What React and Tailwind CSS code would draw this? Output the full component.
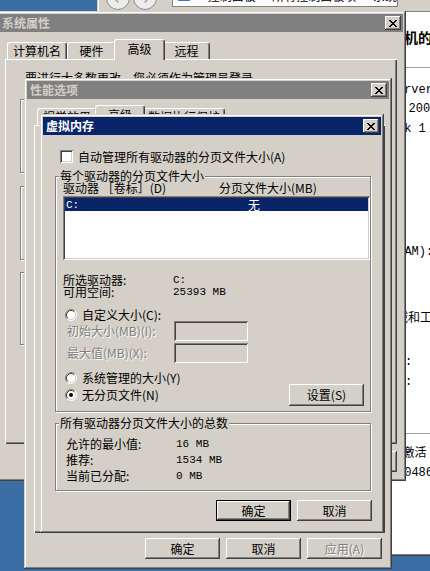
import React from 'react';
import { ArrowLeft, ArrowRight, ChevronRight } from 'lucide-react';

// classic 3D edges
const RAISED = 'shadow-[inset_-1px_-1px_#404040,inset_1px_1px_#ffffff,inset_-2px_-2px_#808080]';
const DEFAULT_BTN = 'shadow-[inset_0_0_0_1px_#000000,inset_-2px_-2px_#404040,inset_2px_2px_#ffffff,inset_-3px_-3px_#808080]';
const FRAME = 'shadow-[inset_-1px_-1px_#404040,inset_1px_1px_#d4d0c8,inset_-2px_-2px_#808080,inset_2px_2px_#ffffff]';
const SUNKEN = 'shadow-[inset_1px_1px_#808080,inset_-1px_-1px_#ffffff,inset_2px_2px_#404040,inset_-2px_-2px_#d4d0c8]';
const PANEL = 'shadow-[inset_1px_1px_#ffffff,inset_-1px_-1px_#404040,inset_-2px_-2px_#808080]';
const ETCHED = 'border border-[#808080] shadow-[inset_1px_1px_#ffffff,1px_1px_#ffffff]';
const DISABLED = 'text-[#808080] [text-shadow:1px_1px_0_#ffffff]';
const MONO = "font-['Liberation_Mono',monospace] text-[11px]";

const CloseBtn = () => (
  <span className={`w-[16px] h-[14px] flex items-center justify-center bg-[#d4d0c8] ${RAISED}`}>
    <svg width="8" height="7" viewBox="0 0 8 7" shapeRendering="crispEdges" fill="#000">
      <path d="M0 0h2v1H0zM6 0h2v1H6zM1 1h2v1H1zM5 1h2v1H5zM2 2h4v1H2zM3 3h2v1H3zM2 4h4v1H2zM1 5h2v1H1zM5 5h2v1H5zM0 6h2v1H0zM6 6h2v1H6z" />
    </svg>
  </span>
);

const Win = ({ title, active, className, children }) => (
  <div className={`absolute flex flex-col p-[3px] bg-[#d4d0c8] ${FRAME} ${className}`}>
    <div
      className={`h-[18px] shrink-0 flex items-center justify-between pl-[3px] pr-[2px] ${
        active ? 'bg-[#0a246a] text-white' : 'bg-[#808080] text-[#d4d0c8]'
      }`}
    >
      <span className="font-bold">{title}</span>
      <CloseBtn />
    </div>
    {children}
  </div>
);

const Tabs = ({ tabs, active, className }) => (
  <div className={`flex items-end h-[20px] relative z-10 ${className}`}>
    {tabs.map(([label, w], i) =>
      i === active ? (
        <div
          key={label}
          className={`${w} -mx-[2px] h-[21px] -mb-px relative z-10 bg-[#d4d0c8] border-t border-l border-white border-r border-r-[#404040] shadow-[inset_-1px_0_#808080] rounded-t-[3px] flex items-center justify-center pb-[2px]`}
        >
          {label}
        </div>
      ) : (
        <div
          key={label}
          className={`${w} h-[17px] bg-[#d4d0c8] border-t border-l border-white border-r border-r-[#404040] shadow-[inset_-1px_0_#808080] rounded-t-[3px] flex items-center justify-center`}
        >
          {label}
        </div>
      )
    )}
  </div>
);

const Group = ({ label, className, children }) => (
  <div className={`relative shrink-0 ${ETCHED} ${className}`}>
    <span className="absolute left-[3px] top-[-7px] px-[1px] bg-[#d4d0c8] leading-[12px] whitespace-nowrap">{label}</span>
    {children}
  </div>
);

const Btn = ({ children, def, disabled, className = '' }) => (
  <button
    className={`w-[75px] h-[21px] flex items-center justify-center bg-[#d4d0c8] ${def ? DEFAULT_BTN : RAISED} ${
      disabled ? DISABLED : ''
    } ${className}`}
  >
    {children}
  </button>
);

const Radio = ({ checked }) => (
  <svg width="12" height="12" viewBox="0 0 12 12" className="shrink-0">
    <circle cx="6" cy="6" r="5" fill="#fff" />
    <path d="M2.11 9.89A5.5 5.5 0 0 1 9.89 2.11" stroke="#808080" fill="none" />
    <path d="M9.89 2.11A5.5 5.5 0 0 1 2.11 9.89" stroke="#fff" fill="none" />
    <path d="M2.82 9.18A4.5 4.5 0 0 1 9.18 2.82" stroke="#404040" fill="none" />
    <path d="M9.18 2.82A4.5 4.5 0 0 1 2.82 9.18" stroke="#d4d0c8" fill="none" />
    {checked && <circle cx="6" cy="6" r="2" fill="#000" />}
  </svg>
);

const CpIcon = () => (
  <svg width="14" height="14" viewBox="0 0 14 14" className="shrink-0">
    <rect x="1" y="2" width="12" height="10" fill="#3b78c4" />
    <rect x="2" y="3" width="4" height="4" fill="#7fc35a" />
    <rect x="8" y="3" width="4" height="4" fill="#f2c744" />
    <rect x="2" y="8" width="10" height="3" fill="#d9e6f5" />
  </svg>
);

const Explorer = () => (
  <div className={`absolute z-[1] left-[97px] top-[-30px] w-[345px] h-[586px] flex flex-col bg-[#d4d0c8] p-[2px] ${FRAME}`}>
    <div className="h-[40px] shrink-0 border-b border-[#808080] flex items-end pb-[1px] pl-[7px]">
      <span className="w-[24px] h-[24px] rounded-full border border-[#8a8a8a] bg-[#ececec] flex items-center justify-center text-[#a0a0a0]">
        <ArrowLeft size={14} strokeWidth={2.5} />
      </span>
      <span className="ml-[3px] w-[24px] h-[24px] rounded-full border border-[#8a8a8a] bg-[#ececec] flex items-center justify-center text-[#a0a0a0]">
        <ArrowRight size={14} strokeWidth={2.5} />
      </span>
      <div className="ml-[15px] mb-[3px] w-[226px] h-[22px] bg-white border border-[#808080] flex items-center gap-[4px] pl-[4px] whitespace-nowrap">
        <CpIcon />
        <ChevronRight size={10} />
        <span>控制面板</span>
        <ChevronRight size={10} />
        <span>所有控制面板项</span>
        <ChevronRight size={10} />
        <span>系统</span>
      </div>
    </div>
    <div className="flex-1 bg-white flex flex-col whitespace-nowrap overflow-hidden font-['Liberation_Mono','Noto_Sans_CJK_SC',monospace]">
      <div className="mt-[18px] ml-[221px] text-[14px] leading-[14px] font-bold font-['Noto_Sans_CJK_SC',sans-serif]">
        查看有关计算机的基本信息
      </div>
      <div className="mt-[23px] ml-[200px] h-px bg-[#a0a0a0]" />
      <div className="mt-[16px] ml-[233px]">Windows Server 2008 R2 Enterprise</div>
      <div className="mt-[7px] ml-[240px]">版权所有 © 2009 Microsoft Corporation。保留所有权利。</div>
      <div className="mt-[8px] ml-[226px]">Service Pack 1</div>
      <div className="mt-[111px] ml-[243px]">安装内存(RAM):</div>
      <div className="mt-[55px] ml-[225px]">计算机名称、域和工作组设置</div>
      <div className="mt-[31px] ml-[258px]">计算机名:</div>
      <div className="mt-[8px] ml-[246px]">计算机全名:</div>
      <div className="mt-[45px] ml-[200px] h-px bg-[#a0a0a0]" />
      <div className="mt-[14px] ml-[246px]">Windows 激活</div>
      <div className="mt-[7px] ml-[238px]">产品 ID: 00486-001-0001076-84000</div>
    </div>
  </div>
);

const SystemProps = () => (
  <Win title="系统属性" className="z-[2] left-[-4px] top-[11px] w-[410px] h-[470px]">
    <Tabs
      className="mt-[7px] ml-[8px]"
      active={2}
      tabs={[
        ['计算机名', 'w-[60px]'],
        ['硬件', 'w-[49px]'],
        ['高级', 'w-[51px]'],
        ['远程', 'w-[47px]'],
      ]}
    />
    <div className={`ml-[6px] w-[392px] h-[385px] shrink-0 pt-[13px] pl-[15px] flex flex-col ${PANEL}`}>
      <p className="pl-[5px] leading-[12px]">要进行大多数更改，您必须作为管理员登录。</p>
      <Group label="性能" className="mt-[15px] w-[363px] h-[74px]">
        <p className="pt-[12px] pl-[10px]">视觉效果，处理器计划，内存使用，以及虚拟内存</p>
      </Group>
      <Group label="用户配置文件" className="mt-[13px] w-[363px] h-[74px]">
        <p className="pt-[12px] pl-[10px]">与您登录有关的桌面设置</p>
      </Group>
      <Group label="启动和故障恢复" className="mt-[12px] w-[363px] h-[73px]">
        <p className="pt-[12px] pl-[10px]">系统启动、系统失败和调试信息</p>
      </Group>
    </div>
    <div className="mt-[7px] pr-[6px] flex justify-end gap-[6px]">
      <Btn>确定</Btn>
      <Btn>取消</Btn>
      <Btn disabled>应用(A)</Btn>
    </div>
  </Win>
);

const PerfOptions = () => (
  <Win title="性能选项" className="z-[3] left-[24px] top-[78px] w-[368px] h-[491px]">
    <Tabs
      className="mt-[6px] ml-[10px]"
      active={1}
      tabs={[
        ['视觉效果', 'w-[60px]'],
        ['高级', 'w-[50px]'],
        ['数据执行保护', 'w-[82px]'],
      ]}
    />
    <div className={`ml-[7px] w-[351px] h-[408px] shrink-0 ${PANEL}`} />
    <div className="mt-[5px] pr-[7px] flex justify-end gap-[6px]">
      <Btn>确定</Btn>
      <Btn>取消</Btn>
      <Btn disabled>应用(A)</Btn>
    </div>
  </Win>
);

const VirtualMemory = () => (
  <Win title="虚拟内存" active className="z-[4] left-[40px] top-[114px] w-[344px] h-[419px]">
    <label className="mt-[15px] ml-[17px] h-[13px] flex items-center gap-[5px]">
      <span className={`w-[13px] h-[13px] bg-white ${SUNKEN}`} />
      <span>自动管理所有驱动器的分页文件大小(A)</span>
    </label>

    <Group label="每个驱动器的分页文件大小" className="mt-[13px] ml-[12px] w-[316px] h-[236px]">
      <div className="pt-[5px] pl-[7px] flex flex-col">
        <div className="flex h-[12px] items-center">
          <span className="w-[156px]">驱动器 ［卷标］(D)</span>
          <span>分页文件大小(MB)</span>
        </div>
        <div className={`mt-[2px] w-[307px] h-[64px] bg-white p-[2px] ${SUNKEN}`}>
          <div className="h-[13px] bg-[#0a246a] text-white flex items-center pl-[1px]">
            <span className={`w-[182px] ${MONO}`}>C:</span>
            <span>无</span>
          </div>
        </div>
        <div className="mt-[14px] h-[12px] flex items-center">
          <span className="w-[110px]">所选驱动器:</span>
          <span className={MONO}>C:</span>
        </div>
        <div className="h-[12px] flex items-center">
          <span className="w-[110px]">可用空间:</span>
          <span className={MONO}>25393 MB</span>
        </div>
        <label className="mt-[11px] ml-[2px] h-[12px] flex items-center gap-[5px]">
          <Radio />
          <span>自定义大小(C):</span>
        </label>
        <div className="h-[20px] flex items-center">
          <span className={`ml-[4px] w-[107px] ${DISABLED}`}>初始大小(MB)(I):</span>
          <span className={`w-[74px] h-[20px] bg-[#d4d0c8] ${SUNKEN}`} />
        </div>
        <div className="mt-[2px] h-[20px] flex items-center">
          <span className={`ml-[4px] w-[107px] ${DISABLED}`}>最大值(MB)(X):</span>
          <span className={`w-[74px] h-[20px] bg-[#d4d0c8] ${SUNKEN}`} />
        </div>
        <label className="mt-[9px] ml-[2px] h-[12px] flex items-center gap-[5px]">
          <Radio />
          <span>系统管理的大小(Y)</span>
        </label>
        <div className="h-[22px] flex items-center justify-between">
          <label className="ml-[2px] flex items-center gap-[5px]">
            <Radio checked />
            <span>无分页文件(N)</span>
          </label>
          <Btn className="mr-[6px] h-[22px]">设置(S)</Btn>
        </div>
      </div>
    </Group>

    <Group label="所有驱动器分页文件大小的总数" className="mt-[11px] ml-[12px] w-[316px] h-[68px]">
      <div className="pt-[12px] pl-[10px] flex flex-col">
        <div className="h-[16px] flex items-center">
          <span className="w-[110px]">允许的最小值:</span>
          <span className={MONO}>16 MB</span>
        </div>
        <div className="h-[16px] flex items-center">
          <span className="w-[110px]">推荐:</span>
          <span className={MONO}>1534 MB</span>
        </div>
        <div className="h-[16px] flex items-center">
          <span className="w-[110px]">当前已分配:</span>
          <span className={MONO}>0 MB</span>
        </div>
      </div>
    </Group>

    <div className="mt-[9px] pr-[9px] flex justify-end gap-[6px]">
      <Btn def>确定</Btn>
      <Btn>取消</Btn>
    </div>
  </Win>
);

export default function App() {
  return (
    <div className="relative w-[430px] h-[571px] overflow-hidden bg-[#3a6ea5] text-black text-[12px] leading-[12px] font-['Noto_Sans_CJK_SC',sans-serif]">
      <Explorer />
      <SystemProps />
      <PerfOptions />
      <VirtualMemory />
    </div>
  );
}
